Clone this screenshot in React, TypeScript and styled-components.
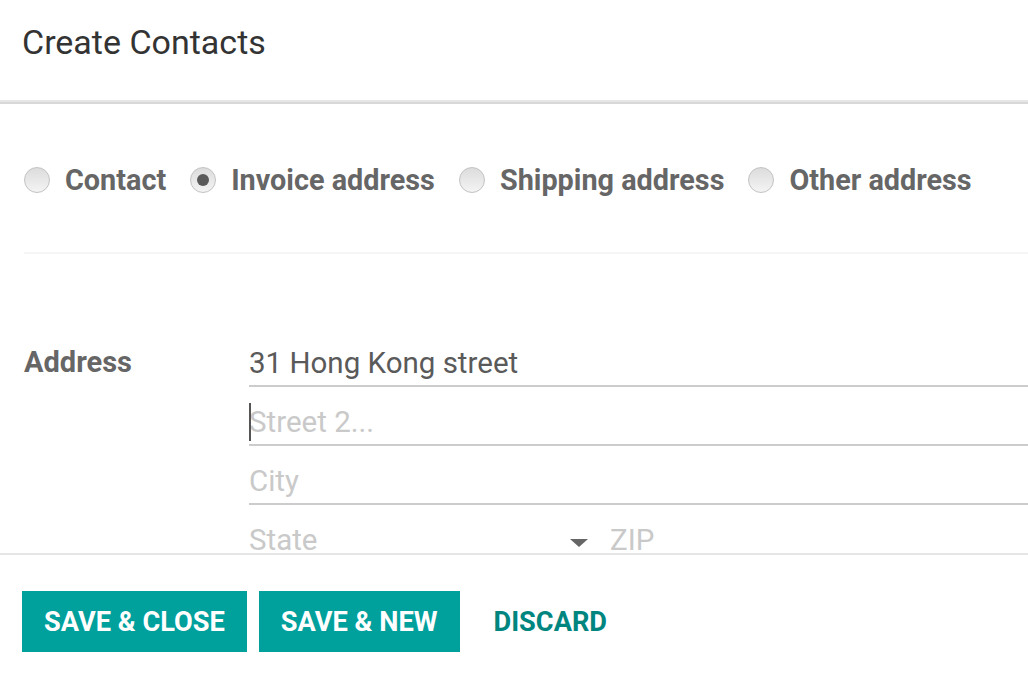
import React from 'react';
import styled, { createGlobalStyle } from 'styled-components';

const GlobalStyle = createGlobalStyle`
  html, body {
    margin: 0;
    padding: 0;
    background: #ffffff;
    font-family: Roboto, "Liberation Sans", Arial, sans-serif;
    overflow: hidden;
  }
`;

const Modal = styled.div`
  width: 1028px;
  height: 675px;
  display: flex;
  flex-direction: column;
  background: #ffffff;
`;

const Header = styled.header`
  height: 102px;
  flex-shrink: 0;
  box-sizing: border-box;
  padding: 25px 22px 0;
  border-bottom: 2px solid #e6e6e6;
  box-shadow: 0 2px 0 #d8d8d8;
`;

const Title = styled.h4`
  margin: 0;
  font-size: 34px;
  line-height: 34px;
  font-weight: 400;
  color: #333333;
`;

const Body = styled.div`
  margin-top: 2px;
  height: 449px;
  flex-shrink: 0;
  overflow: hidden;
  padding-left: 24px;
`;

const RadioRow = styled.div`
  display: flex;
  align-items: center;
  margin-top: 59px;
  height: 34px;
`;

const RadioOption = styled.label`
  display: flex;
  align-items: center;
  gap: 15px;
  margin-right: 24px;
  font-size: 28.8px;
  font-weight: 700;
  color: #666666;
  white-space: nowrap;
`;

const RadioInput = styled.input.attrs({ type: 'radio' })`
  appearance: none;
  margin: 0;
  width: 26px;
  height: 26px;
  border-radius: 50%;
  border: 1px solid #c2c2c2;
  background: linear-gradient(#dcdcdc, #f4f4f4);
  box-sizing: border-box;
  display: grid;
  place-items: center;
  &:checked::after {
    content: '';
    width: 12px;
    height: 12px;
    border-radius: 50%;
    background: #5a5a5a;
  }
`;

const Separator = styled.div`
  margin-top: 55px;
  border-top: 2px solid #f6f6f6;
`;

const FieldGroup = styled.div`
  display: grid;
  grid-template-columns: 225px 1fr;
  margin-top: 74px;
`;

const FieldLabel = styled.div`
  padding-top: 17px;
  font-size: 29px;
  line-height: 34px;
  font-weight: 700;
  color: #666666;
`;

const Fields = styled.div`
  display: flex;
  flex-direction: column;
`;

const FieldWrap = styled.div`
  position: relative;
  display: flex;
  align-items: flex-end;
`;

const TextInput = styled.input<{ $width?: number }>`
  box-sizing: border-box;
  ${p => (p.$width ? `width: ${p.$width}px;` : 'width: 100%;')}
  height: 59px;
  padding: 13px 0 0;
  margin: 0;
  border: none;
  border-bottom: 2px solid #cccccc;
  outline: none;
  font-family: Roboto, "Liberation Sans", Arial, sans-serif;
  font-size: 29.5px;
  color: #5a5a5a;
  background: transparent;
  &::placeholder {
    color: #c9c9c9;
  }
`;

const Caret = styled.span`
  position: absolute;
  left: 0;
  top: 16px;
  width: 2px;
  height: 38px;
  background: #555555;
`;

const SelectArrow = styled.span`
  position: absolute;
  left: 321px;
  top: 34px;
  width: 0;
  height: 0;
  border-left: 9px solid transparent;
  border-right: 9px solid transparent;
  border-top: 8px solid #666666;
`;

const SplitRow = styled.div`
  display: flex;
  gap: 15px;
`;

const Footer = styled.footer`
  flex-shrink: 0;
  border-top: 2px solid #e6e6e6;
  padding: 36px 22px 23px;
  display: flex;
  gap: 12px;
`;

const Button = styled.button<{ $primary?: boolean }>`
  height: 61px;
  padding: 0 22px;
  border: none;
  border-radius: 0;
  font-family: Roboto, "Liberation Sans", Arial, sans-serif;
  font-size: 27.2px;
  font-weight: 700;
  text-transform: uppercase;
  cursor: pointer;
  background: ${p => (p.$primary ? '#00a09d' : 'transparent')};
  color: ${p => (p.$primary ? '#ffffff' : '#00857f')};
`;

const types = [
  { id: 'contact', label: 'Contact' },
  { id: 'invoice', label: 'Invoice address' },
  { id: 'delivery', label: 'Shipping address' },
  { id: 'other', label: 'Other address' },
];

const App: React.FC = () => {
  return (
    <>
      <GlobalStyle />
      <Modal>
        <Header>
          <Title>Create Contacts</Title>
        </Header>

        <Body>
          <RadioRow>
            {types.map(t => (
              <RadioOption key={t.id}>
                <RadioInput name="type" defaultChecked={t.id === 'invoice'} />
                {t.label}
              </RadioOption>
            ))}
          </RadioRow>

          <Separator />

          <FieldGroup>
            <FieldLabel>Address</FieldLabel>
            <Fields>
              <FieldWrap>
                <TextInput defaultValue="31 Hong Kong street" />
              </FieldWrap>
              <FieldWrap>
                <TextInput placeholder="Street 2..." />
                <Caret />
              </FieldWrap>
              <FieldWrap>
                <TextInput placeholder="City" />
              </FieldWrap>
              <SplitRow>
                <FieldWrap>
                  <TextInput $width={346} placeholder="State" />
                  <SelectArrow />
                </FieldWrap>
                <FieldWrap style={{ flex: 1 }}>
                  <TextInput placeholder="ZIP" />
                </FieldWrap>
              </SplitRow>
            </Fields>
          </FieldGroup>
        </Body>

        <Footer>
          <Button $primary>Save &amp; Close</Button>
          <Button $primary>Save &amp; New</Button>
          <Button>Discard</Button>
        </Footer>
      </Modal>
    </>
  );
};

export default App;
